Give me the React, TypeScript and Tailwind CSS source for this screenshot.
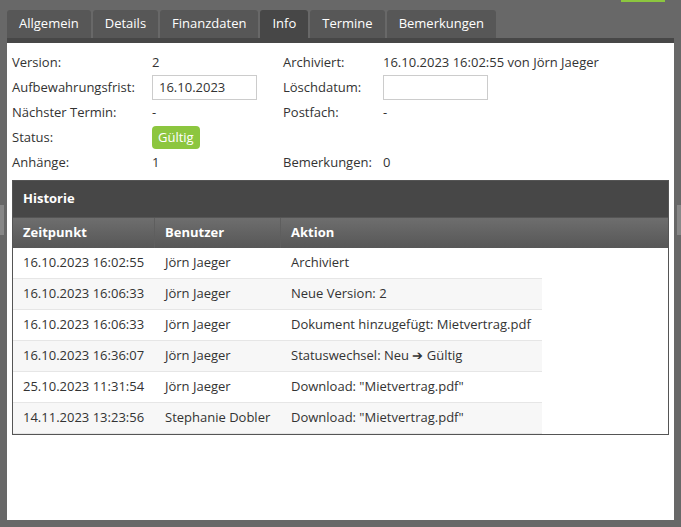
import React from "react";

const rows = [
  ["16.10.2023 16:02:55", "Jörn Jaeger", "Archiviert"],
  ["16.10.2023 16:06:33", "Jörn Jaeger", "Neue Version: 2"],
  ["16.10.2023 16:06:33", "Jörn Jaeger", "Dokument hinzugefügt: Mietvertrag.pdf"],
  ["16.10.2023 16:36:07", "Jörn Jaeger", "Statuswechsel: Neu ➔ Gültig"],
  ["25.10.2023 11:31:54", "Jörn Jaeger", "Download: \"Mietvertrag.pdf\""],
  ["14.11.2023 13:23:56", "Stephanie Dobler", "Download: \"Mietvertrag.pdf\""],
];

const tabs = ["Allgemein", "Details", "Finanzdaten", "Info", "Termine", "Bemerkungen"];

export default function App() {
  return (
    <div className="relative w-[681px] h-[527px] bg-[#686868] text-[13px] text-[#333] overflow-hidden" style={{ fontFamily: '"Open Sans", sans-serif' }}>
      <div className="absolute right-[16px] top-0 w-[44px] h-[2px] bg-[#8cc63f]" />
      <div className="absolute left-0 top-[205px] w-[4px] h-[30px] bg-[#888]" />
      <div className="absolute right-0 top-[205px] w-[4px] h-[30px] bg-[#888]" />
      <div className="px-[7px] pt-[10px] pb-[7px] h-full flex flex-col">
        <div className="flex gap-[2px] pl-[0px]">
          {tabs.map((t) => (
            <div key={t} className={`h-[28px] px-[12px] flex items-center rounded-t-[3px] text-white text-[13px] ${t === "Info" ? "bg-[#474747]" : "bg-[#575757]"}`}>{t}</div>
          ))}
        </div>
        <div className="h-[5px] bg-[#474747]" />
        <div className="flex-1 bg-white px-[5px] pt-[7px]">
          <div className="grid grid-cols-[140px_131px_100px_1fr] leading-[25px]">
            <div>Version:</div><div>2</div><div>Archiviert:</div><div>16.10.2023 16:02:55 von Jörn Jaeger</div>
            <div>Aufbewahrungsfrist:</div>
            <div className="flex items-center"><div className="w-[105px] h-[25px] border border-[#ccc] px-[6px] leading-[23px]">16.10.2023</div></div>
            <div>Löschdatum:</div>
            <div className="flex items-center"><div className="w-[105px] h-[25px] border border-[#ccc]" /></div>
            <div>Nächster Termin:</div><div>-</div><div>Postfach:</div><div>-</div>
            <div>Status:</div>
            <div className="flex items-center"><span className="bg-[#8cc63f] text-white rounded-[4px] px-[6px] leading-[23px]">Gültig</span></div>
            <div /><div />
            <div>Anhänge:</div><div>1</div><div>Bemerkungen:</div><div>0</div>
          </div>
          <div className="mt-[5px] border border-[#555]">
            <div className="h-[36px] bg-[#474747] text-white font-bold px-[10px] flex items-center">Historie</div>
            <div className="h-[31px] bg-gradient-to-b from-[#6e6e6e] to-[#575757] text-white font-bold grid grid-cols-[142px_126px_1fr] border-t border-[#555]">
              <div className="px-[10px] flex items-center border-r border-[#5e5e5e]">Zeitpunkt</div>
              <div className="px-[10px] flex items-center border-r border-[#5e5e5e]">Benutzer</div>
              <div className="px-[10px] flex items-center">Aktion</div>
            </div>
            {rows.map((r, i) => (
              <div key={i} className={`w-[529px] h-[31px] grid grid-cols-[142px_126px_1fr] items-center border-b border-[#e6e6e6] ${i % 2 ? "bg-[#f7f7f7]" : "bg-white"}`}>
                <div className="px-[10px] whitespace-nowrap">{r[0]}</div>
                <div className="px-[10px] whitespace-nowrap">{r[1]}</div>
                <div className="px-[10px] whitespace-nowrap">{r[2]}</div>
              </div>
            ))}
          </div>
        </div>
      </div>
    </div>
  );
}
